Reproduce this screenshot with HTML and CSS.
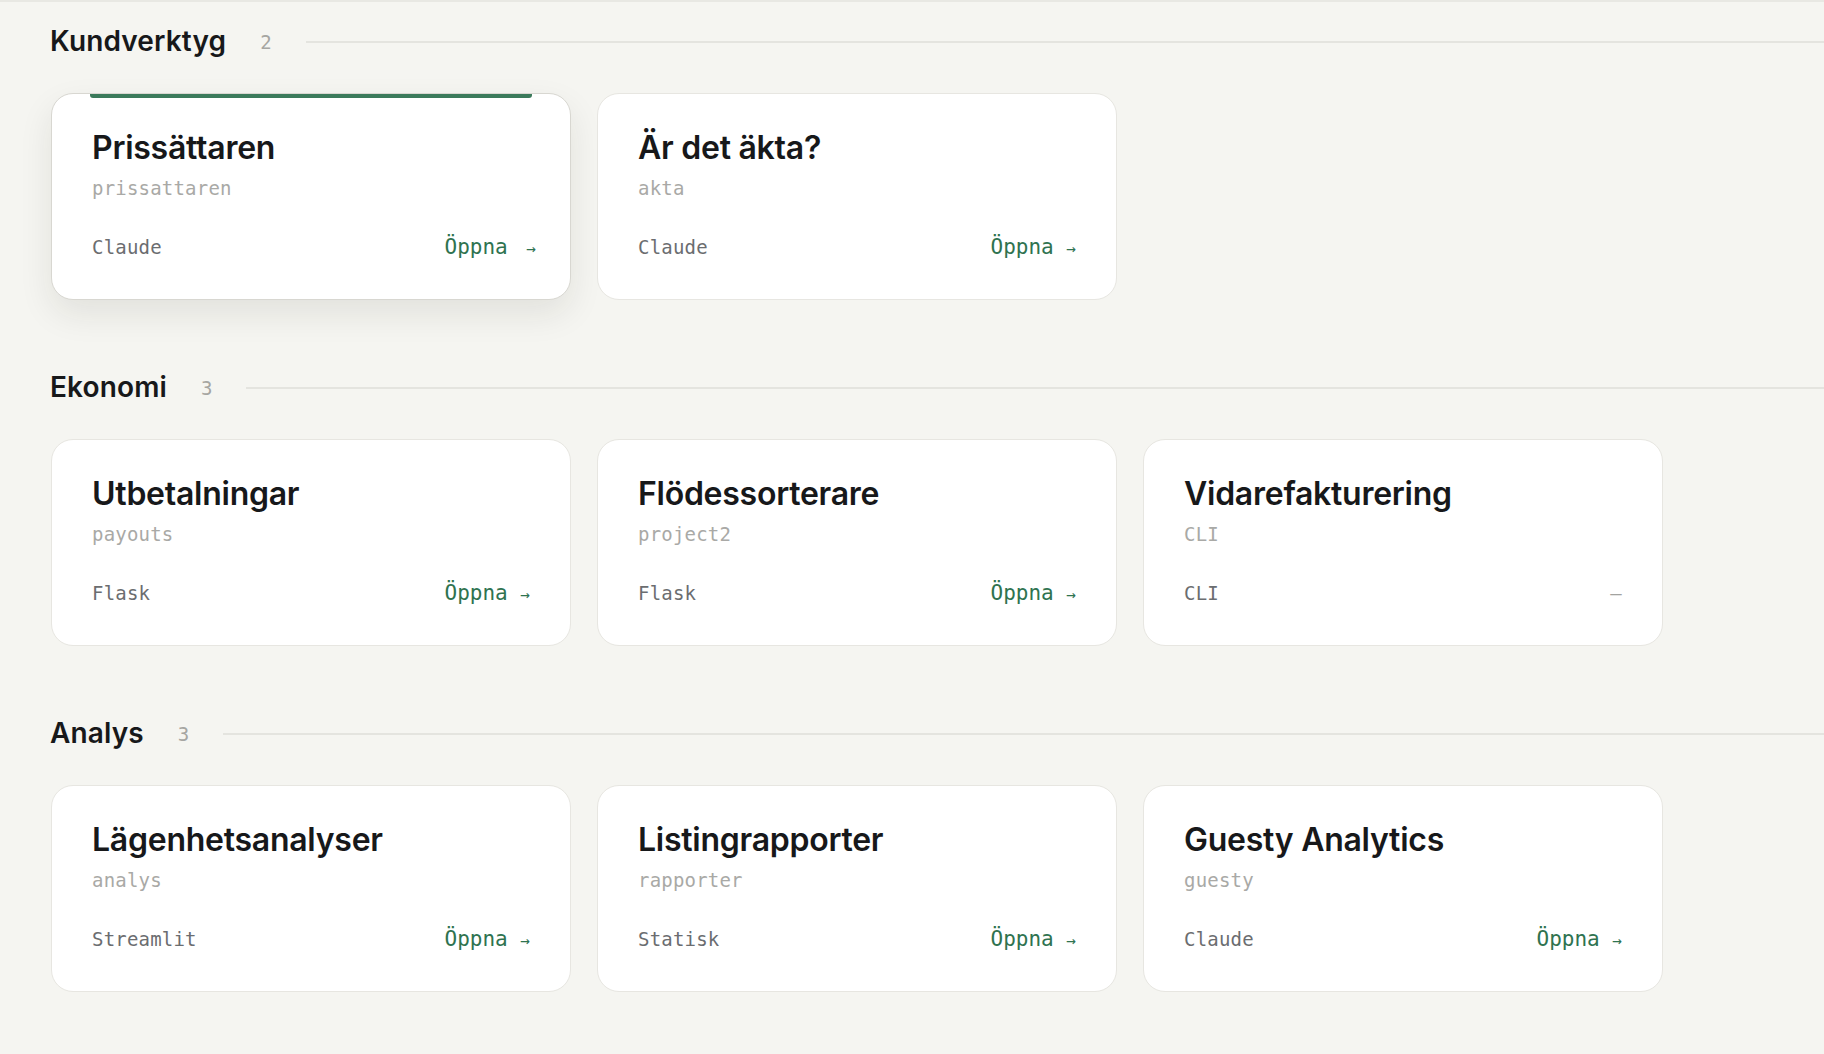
FILE: index.html
```html
<!DOCTYPE html>
<html lang="sv">

    <head>
        <meta charset="utf-8">
        <meta name="viewport" content="width=device-width, initial-scale=1">
        <title>Verktyg</title>
        <link rel="stylesheet" href="styles.css">
    </head>

    <body>

        <main>

            <section class="group">
                <header class="group_head">
                    <h2>Kundverktyg</h2>
                    <span class="count">2</span>
                    <span class="rule"></span>
                </header>
                <div class="grid">
                    <a class="card is_hover" href="#">
                        <h3>Prissättaren</h3>
                        <div class="slug">prissattaren</div>
                        <div class="foot"><span class="kind">Claude</span><span class="open">Öppna <i>→</i></span></div>
                    </a>
                    <a class="card" href="#">
                        <h3>Är det äkta?</h3>
                        <div class="slug">akta</div>
                        <div class="foot"><span class="kind">Claude</span><span class="open">Öppna <i>→</i></span></div>
                    </a>
                </div>
            </section>

            <section class="group">
                <header class="group_head">
                    <h2>Ekonomi</h2>
                    <span class="count">3</span>
                    <span class="rule"></span>
                </header>
                <div class="grid">
                    <a class="card" href="#">
                        <h3>Utbetalningar</h3>
                        <div class="slug">payouts</div>
                        <div class="foot"><span class="kind">Flask</span><span class="open">Öppna <i>→</i></span></div>
                    </a>
                    <a class="card" href="#">
                        <h3>Flödessorterare</h3>
                        <div class="slug">project2</div>
                        <div class="foot"><span class="kind">Flask</span><span class="open">Öppna <i>→</i></span></div>
                    </a>
                    <div class="card">
                        <h3>Vidarefakturering</h3>
                        <div class="slug">CLI</div>
                        <div class="foot"><span class="kind">CLI</span><span class="none">—</span></div>
                    </div>
                </div>
            </section>

            <section class="group">
                <header class="group_head">
                    <h2>Analys</h2>
                    <span class="count">3</span>
                    <span class="rule"></span>
                </header>
                <div class="grid">
                    <a class="card" href="#">
                        <h3>Lägenhetsanalyser</h3>
                        <div class="slug">analys</div>
                        <div class="foot"><span class="kind">Streamlit</span><span class="open">Öppna <i>→</i></span></div>
                    </a>
                    <a class="card" href="#">
                        <h3>Listingrapporter</h3>
                        <div class="slug">rapporter</div>
                        <div class="foot"><span class="kind">Statisk</span><span class="open">Öppna <i>→</i></span></div>
                    </a>
                    <a class="card" href="#">
                        <h3>Guesty Analytics</h3>
                        <div class="slug">guesty</div>
                        <div class="foot"><span class="kind">Claude</span><span class="open">Öppna <i>→</i></span></div>
                    </a>
                </div>
            </section>

        </main>

    </body>

</html>
```

FILE: styles.css
```css
body {
    margin: 0;
    background: #f5f5f1;
    border-top: 2px solid #e8e8e3;
    color: #17181a;
    font-family: Inter, "Noto Sans", sans-serif;
}

main {
    padding: 23px 0 60px 50px;
}

.group + .group {
    margin-top: 71px;
}

.group_head {
    display: flex;
    align-items: center;
    gap: 34px;
}
.group_head h2 {
    margin: 0;
    font-size: 28px;
    line-height: 1.2;
    font-weight: 600;
    letter-spacing: 0.005em;
}
.count {
    font-family: "DejaVu Sans Mono", monospace;
    font-size: 19px;
    color: #a6a6a2;
}
.rule {
    flex: 1;
    height: 1.5px;
    background: #e4e4df;
}

.grid {
    display: grid;
    grid-template-columns: repeat(3, 520px);
    gap: 26px;
    margin-top: 34px;
    margin-left: 1px;
}

.card {
    position: relative;
    display: block;
    padding: 35px 40px 37px 40px;
    background: #fff;
    border: 1.5px solid #e7e6e1;
    border-radius: 22px;
    color: inherit;
    text-decoration: none;
}
.card.is_hover {
    border-color: #d8d7d1;
    box-shadow: 0 14px 34px rgba(30, 30, 20, 0.09);
}
.card.is_hover::before {
    content: "";
    position: absolute;
    top: 0; left: 38px; right: 38px;
    height: 4px;
    border-radius: 0 0 3px 3px;
    background: #3b7a5b;
}
.card.is_hover .open i {
    transform: translateX(6px);
}

.card h3 {
    margin: 0;
    font-size: 32px;
    line-height: 1.2;
    font-weight: 600;
    letter-spacing: -0.008em;
}

.slug, .foot {
    font-family: "DejaVu Sans Mono", monospace;
    font-size: 19px;
    line-height: 26px;
    letter-spacing: 0.2px;
}
.slug {
    margin-top: 8px;
    color: #a9a9a6;
}
.foot {
    display: flex;
    justify-content: space-between;
    align-items: baseline;
    margin-top: 33px;
}
.kind {
    color: #6b6d70;
}
.open {
    color: #2f7350;
    font-size: 21px;
    line-height: 26px;
    letter-spacing: 0;
}
.open i {
    display: inline-block;
    font-style: normal;
    font-size: 16px;
}
.none {
    color: #a3a3a0;
}
```
